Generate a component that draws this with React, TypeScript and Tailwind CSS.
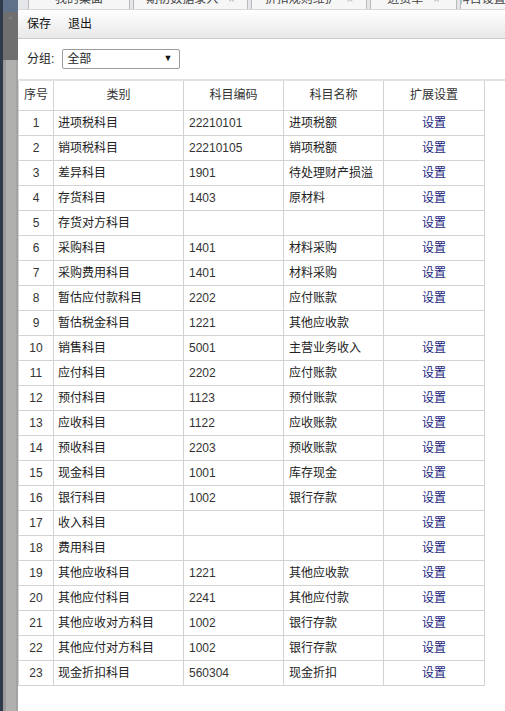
import React from "react";

const rows: [string, string, string, boolean][] = [
  ["进项税科目", "22210101", "进项税额", true],
  ["销项税科目", "22210105", "销项税额", true],
  ["差异科目", "1901", "待处理财产损溢", true],
  ["存货科目", "1403", "原材料", true],
  ["存货对方科目", "", "", true],
  ["采购科目", "1401", "材料采购", true],
  ["采购费用科目", "1401", "材料采购", true],
  ["暂估应付款科目", "2202", "应付账款", true],
  ["暂估税金科目", "1221", "其他应收款", false],
  ["销售科目", "5001", "主营业务收入", true],
  ["应付科目", "2202", "应付账款", true],
  ["预付科目", "1123", "预付账款", true],
  ["应收科目", "1122", "应收账款", true],
  ["预收科目", "2203", "预收账款", true],
  ["现金科目", "1001", "库存现金", true],
  ["银行科目", "1002", "银行存款", true],
  ["收入科目", "", "", true],
  ["费用科目", "", "", true],
  ["其他应收科目", "1221", "其他应收款", true],
  ["其他应付科目", "2241", "其他应付款", true],
  ["其他应收对方科目", "1002", "银行存款", true],
  ["其他应付对方科目", "1002", "银行存款", true],
  ["现金折扣科目", "560304", "现金折扣", true],
];

const tabs: { label: string; w: string; close: boolean }[] = [
  { label: "我的桌面", w: "w-[102px]", close: false },
  { label: "期初数据录入", w: "w-[115px]", close: true },
  { label: "折扣规则维护", w: "w-[116px]", close: true },
  { label: "进货单", w: "w-[87px]", close: true },
  { label: "科目设置", w: "w-[60px]", close: true },
];

export default function App() {
  return (
    <div
      className="flex h-[711px] w-[505px] overflow-hidden bg-white text-[12px] text-[#222]"
      style={{ fontFamily: '"Liberation Sans", "Noto Sans CJK SC", sans-serif' }}
    >
      {/* left scrollbar strip */}
      <div className="flex h-full w-[18px] shrink-0">
        <div className="h-full w-[3px] bg-[#2f3a4b]" />
        <div className="flex h-full flex-1 flex-col">
          <div className="h-[12px] bg-[#5f7089]" />
          <div className="flex h-[48px] justify-center bg-[#6f6f6f] pt-[2px] text-[8px] leading-[10px] text-[#9a9a9a]">
            ^
          </div>
          <div className="flex flex-1">
            <div className="w-[3px] bg-[#9b9b9b]" />
            <div className="flex-1 bg-[#b0b0ae]" />
            <div className="w-[2px] bg-[#a3a3a3]" />
          </div>
        </div>
      </div>

      {/* main */}
      <div className="flex min-w-0 flex-1 flex-col">
        {/* tab bar */}
        <div className="flex h-[10px] shrink-0 gap-[3px] overflow-hidden border-b border-[#d8d8d8] bg-[#e4e6ea] pl-[10px]">
          {tabs.map((t) => (
            <div
              key={t.label}
              className={`${t.w} flex h-[10px] shrink-0 justify-center gap-[10px] overflow-hidden border-x border-[#b9b9b9] bg-[#f6f6f6] text-[#444]`}
            >
              <span className="mt-[-9px] block whitespace-nowrap text-[12px] leading-[16px]">{t.label}</span>
              {t.close && (
                <span className="mt-[-9px] block text-[11px] leading-[16px] text-[#aaa]">×</span>
              )}
            </div>
          ))}
        </div>

        {/* toolbar */}
        <div className="flex h-[29px] shrink-0 items-center gap-[17px] border-b border-[#c9c9c9] bg-gradient-to-b from-white to-[#e8e8e8] pl-[9px] text-[12px] text-[#111]">
          <span>保存</span>
          <span>退出</span>
        </div>

        {/* filter row */}
        <div className="flex h-[42px] shrink-0 items-center border-b-2 border-[#e2e2e2] pl-[9px]">
          <span className="mr-[8px] text-[#222]">分组:</span>
          <div className="flex h-[20px] w-[118px] items-center justify-between rounded-[2px] border border-[#9c9c9c] bg-white pl-[4px] pr-[7px]">
            <span>全部</span>
            <span className="text-[9px] text-[#111]">▼</span>
          </div>
        </div>

        {/* table */}
        <table className="w-[466px] table-fixed border-collapse">
          <colgroup>
            <col className="w-[35px]" />
            <col className="w-[130px]" />
            <col className="w-[100px]" />
            <col className="w-[100px]" />
            <col className="w-[101px]" />
          </colgroup>
          <thead>
            <tr className="h-[29px]">
              {["序号", "类别", "科目编码", "科目名称", "扩展设置"].map((h) => (
                <th
                  key={h}
                  className="border border-t-0 border-[#d3d3d3] p-0 text-center text-[12px] font-normal text-[#333]"
                >
                  {h}
                </th>
              ))}
            </tr>
          </thead>
          <tbody>
            {rows.map((r, i) => (
              <tr key={i} className="h-[25px]">
                <td className="border border-[#d3d3d3] p-0 text-center text-[#333]">{i + 1}</td>
                <td className="border border-[#d3d3d3] p-0 pl-[4px] whitespace-nowrap">{r[0]}</td>
                <td className="border border-[#d3d3d3] p-0 pl-[5px] text-[#333]">{r[1]}</td>
                <td className="border border-[#d3d3d3] p-0 pl-[5px] whitespace-nowrap">{r[2]}</td>
                <td className="border border-[#d3d3d3] p-0 text-center text-[#1b1f80]">
                  {r[3] ? "设置" : ""}
                </td>
              </tr>
            ))}
          </tbody>
        </table>
      </div>
    </div>
  );
}
